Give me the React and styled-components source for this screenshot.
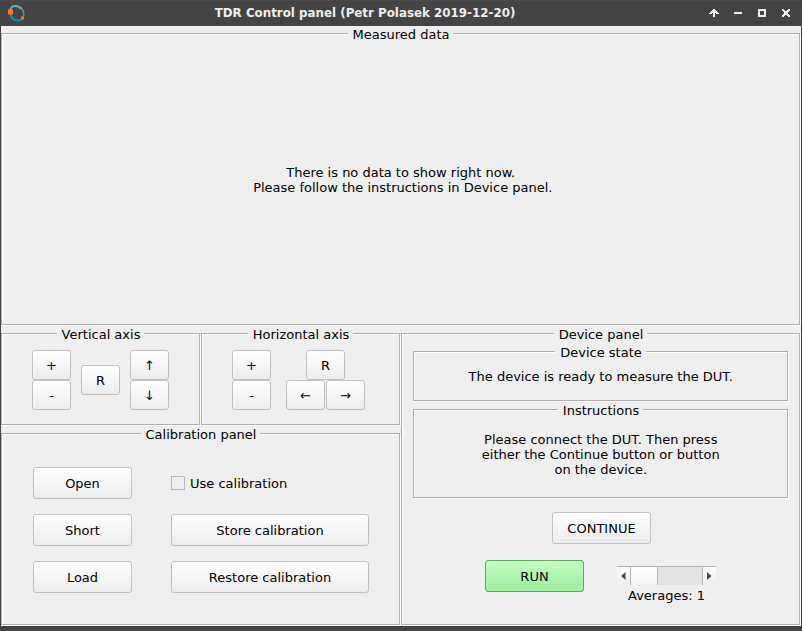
import React from "react";
import styled, { createGlobalStyle } from "styled-components";

const GlobalStyle = createGlobalStyle`
  * { box-sizing: border-box; }
  body {
    margin: 0;
    background: #444;
    font: 13px/15px "DejaVu Sans", sans-serif;
    color: #000;
  }
  button, label { font: inherit; color: inherit; }
`;

const Window = styled.div`
  width: 802px;
  height: 631px;
  display: flex;
  flex-direction: column;
  background: #444;
`;

const TitleBar = styled.header`
  height: 26px;
  display: grid;
  grid-template-columns: 100px 1fr 100px;
  align-items: center;
  padding: 0 10px 0 7px;
  box-shadow: inset 0 1px 0 #4a4a4a;
`;

const Title = styled.h1`
  margin: 0;
  padding-right: 69px;
  font-size: 11.86px;
  line-height: 26px;
  font-weight: bold;
  text-align: center;
  white-space: nowrap;
  color: #eee;
`;

const Controls = styled.div`
  display: flex;
  justify-content: flex-end;
  gap: 12px;
  svg { display: block; }
`;

const Body = styled.main`
  height: 600px;
  margin: 0 1px;
  padding: 7px 0 1px;
  display: grid;
  grid-template-columns: 199px 199px 399px;
  grid-template-rows: 292px 92px 192px;
  gap: 8px 1px;
  background: #efefef;
`;

const AREAS = {
  data: "1 / 1 / 2 / 4",
  vertical: "2 / 1",
  horizontal: "2 / 2",
  calibration: "3 / 1 / 4 / 3",
  device: "2 / 3 / 4 / 4",
};

const Frame = styled.section`
  grid-area: ${(p) => (p.$area ? AREAS[p.$area] : "auto")};
  height: ${(p) => (p.$height ? p.$height + "px" : "auto")};
  display: flex;
  flex-direction: column;
  align-items: stretch;
  border: 1px solid #b0b0b0;
  box-shadow: 1px 1px 0 #fff, inset 1px 1px 0 #fff;
`;

const Legend = styled.h2`
  align-self: center;
  margin: -7px 0 -8px;
  padding: 0 4px 0 5px;
  font: inherit;
  white-space: nowrap;
  background: #efefef;
`;

const Message = styled.p`
  margin: 0;
  padding: ${(p) => p.$top}px 0 0 0.5px;
  text-align: center;
  white-space: pre-line;
`;

const Button = styled.button`
  width: ${(p) => p.$width || 99}px;
  height: ${(p) => (p.$small ? 30 : 32)}px;
  padding: 0;
  border: 1px solid ${(p) => (p.$go ? "#5fa95f" : "#c2c2c2")};
  border-radius: 3px;
  background: ${(p) =>
    p.$go
      ? "linear-gradient(#c3fec3, #9bee9b)"
      : "linear-gradient(#fefefe, #ededed)"};
`;

const AxisRow = styled.div`
  display: flex;
  align-items: center;
  gap: ${(p) => p.$gap}px;
  padding: 16px 0 0 30px;
`;

const Stack = styled.div`
  display: flex;
  flex-direction: column;
  align-items: center;
`;

const Pair = styled.div`
  display: flex;
  gap: 1px;
`;

const CalibrationGrid = styled.div`
  display: grid;
  grid-template-columns: 99px 198px;
  grid-auto-rows: 32px;
  gap: 15px 39px;
  padding: 33px 0 0 31px;
`;

const CheckLabel = styled.label`
  display: flex;
  align-items: center;
  gap: 5px;
`;

const CheckBox = styled.span`
  width: 14px;
  height: 14px;
  border: 1px solid #b9b9b9;
`;

const DeviceContent = styled.div`
  display: flex;
  flex-direction: column;
  gap: 8px;
  padding: 17px 11px 0;
`;

const ContinueRow = styled.div`
  display: flex;
  justify-content: center;
  padding: 6px 0 0 2px;
`;

const RunRow = styled.div`
  display: flex;
  gap: 33px;
  padding: 8px 0 0 72px;
`;

const Averages = styled.div`
  width: 99px;
  padding-top: 6px;
  text-align: center;
`;

const ScrollBar = styled.div`
  display: grid;
  grid-template-columns: 13px 28px 44px 14px;
  height: 19px;
  margin-bottom: 3px;
  border-top: 1px solid #b6b6b6;
  background: #e3e3e3;
`;

const ScrollArrow = styled.span`
  display: flex;
  align-items: center;
  justify-content: center;
  border-left: ${(p) => (p.$next ? "1px solid #b6b6b6" : "0")};
  background: linear-gradient(#fdfdfd, #eee);
`;

const Thumb = styled.span`
  border: solid #b6b6b6;
  border-width: 0 1px;
  background: linear-gradient(#fff, #f2f2f2);
`;

const Logo = () => (
  <svg width="18" height="18" viewBox="0 0 18 18">
    <g fill="none">
      <path d="M3 7C3.500 3.500 6 1.800 9 2c1.800.2 3.500 1 5 2.500" stroke="#4db4cf" strokeWidth="2" />
      <path d="M3.500 10.500c1 3.500 4 6 7.500 6l3.500-.8" stroke="#178cb8" strokeWidth="2.200" />
      <path d="M14 4c3 3 3.400 7 1.800 10" stroke="#3fa3c2" strokeWidth="1.200" />
    </g>
    <path d="M1 5.500h5v5H1zM13 3h2v2h-2zM14 12.500h3v3h-3z" fill="#ff7721" />
  </svg>
);

const ICONS = {
  up: "M5 0h2v1h1v1h1v1h1v1h1v1H8V4H7v4H5V4H4v1H1V4h1V3h1V2h1V1h1z",
  minimize: "M2 3h8v2H2z",
  maximize: "M2 0h8v8H2zM4 2v4h4V2z",
  close: "M2 0h2v1h1v1h2V1h1V0h2v2H9v1H8v2h1v1h1v2H8V7H7V6H5v1H4v1H2V6h1V5h1V3H3V2H2z",
};

const WindowIcon = ({ name }) => (
  <svg width="12" height="9" viewBox="0 0 12 9" shapeRendering="crispEdges">
    <path d={ICONS[name]} fill="#eee" fillRule="evenodd" />
  </svg>
);

const Triangle = ({ next }) => (
  <svg width="5" height="8" viewBox="0 0 5 8">
    <path d={next ? "M0 0l4.500 4L0 8z" : "M4.500 0L0 4l4.500 4z"} fill="#4c4c4c" />
  </svg>
);

const AxisButton = ({ children }) => (
  <Button $small $width={39}>{children}</Button>
);

export default function App() {
  return (
    <>
      <GlobalStyle />
      <Window>
        <TitleBar>
          <Logo />
          <Title>TDR Control panel (Petr Polasek 2019-12-20)</Title>
          <Controls>
            {Object.keys(ICONS).map((name) => (
              <WindowIcon key={name} name={name} />
            ))}
          </Controls>
        </TitleBar>
        <Body>
          <Frame $area="data">
            <Legend>Measured data</Legend>
            <Message $top={131}>
              {"There is no data to show right now.\n\u00a0Please follow the instructions in Device panel."}
            </Message>
          </Frame>
          <Frame $area="vertical">
            <Legend>Vertical axis</Legend>
            <AxisRow $gap={10}>
              <Stack>
                <AxisButton>+</AxisButton>
                <AxisButton>-</AxisButton>
              </Stack>
              <AxisButton>R</AxisButton>
              <Stack>
                <AxisButton>↑</AxisButton>
                <AxisButton>↓</AxisButton>
              </Stack>
            </AxisRow>
          </Frame>
          <Frame $area="horizontal">
            <Legend>Horizontal axis</Legend>
            <AxisRow $gap={15}>
              <Stack>
                <AxisButton>+</AxisButton>
                <AxisButton>-</AxisButton>
              </Stack>
              <Stack>
                <AxisButton>R</AxisButton>
                <Pair>
                  <AxisButton>←</AxisButton>
                  <AxisButton>→</AxisButton>
                </Pair>
              </Stack>
            </AxisRow>
          </Frame>
          <Frame $area="calibration">
            <Legend>Calibration panel</Legend>
            <CalibrationGrid>
              <Button>Open</Button>
              <CheckLabel>
                <CheckBox />
                Use calibration
              </CheckLabel>
              <Button>Short</Button>
              <Button $width={198}>Store calibration</Button>
              <Button>Load</Button>
              <Button $width={198}>Restore calibration</Button>
            </CalibrationGrid>
          </Frame>
          <Frame $area="device">
            <Legend>Device panel</Legend>
            <DeviceContent>
              <Frame $height={50}>
                <Legend>Device state</Legend>
                <Message $top={17}>The device is ready to measure the DUT.</Message>
              </Frame>
              <Frame $height={89}>
                <Legend>Instructions</Legend>
                <Message $top={22}>
                  {"Please connect the DUT. Then press\neither the Continue button or button\non the device."}
                </Message>
              </Frame>
              <ContinueRow>
                <Button>CONTINUE</Button>
              </ContinueRow>
              <RunRow>
                <Button $go>RUN</Button>
                <Averages>
                  <ScrollBar>
                    <ScrollArrow>
                      <Triangle />
                    </ScrollArrow>
                    <Thumb />
                    <span />
                    <ScrollArrow $next>
                      <Triangle next />
                    </ScrollArrow>
                  </ScrollBar>
                  Averages: 1
                </Averages>
              </RunRow>
            </DeviceContent>
          </Frame>
        </Body>
      </Window>
    </>
  );
}
